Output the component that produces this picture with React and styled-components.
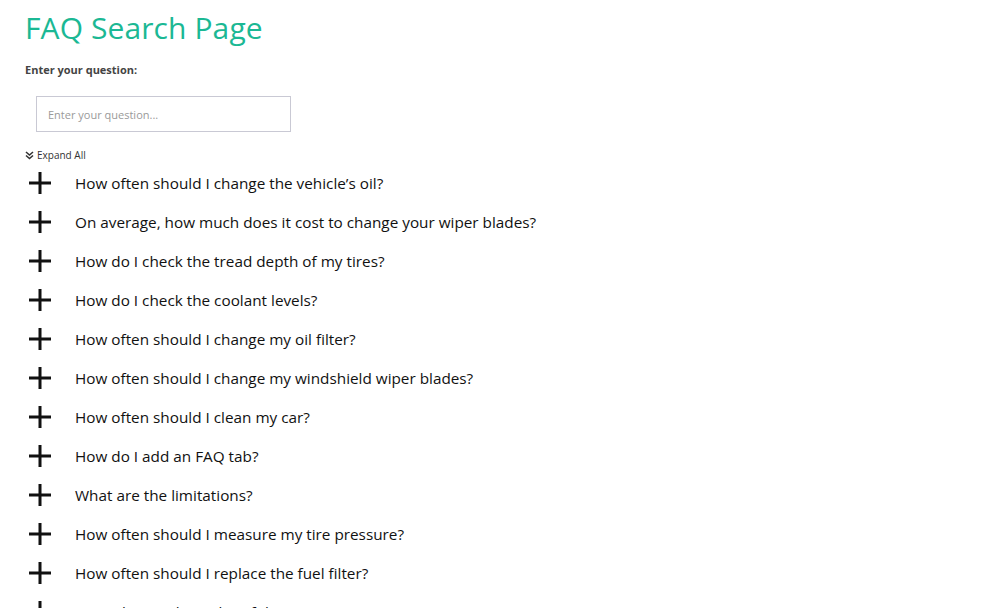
import React, { useState } from "react";
import styled, { createGlobalStyle } from "styled-components";

const GlobalStyle = createGlobalStyle`
  html, body {
    margin: 0;
    padding: 0;
    background: #fff;
  }
  body {
    font-family: "Open Sans", "Liberation Sans", sans-serif;
    color: #111;
  }
`;

const faqs = [
  "How often should I change the vehicle\u2019s oil?",
  "On average, how much does it cost to change your wiper blades?",
  "How do I check the tread depth of my tires?",
  "How do I check the coolant levels?",
  "How often should I change my oil filter?",
  "How often should I change my windshield wiper blades?",
  "How often should I clean my car?",
  "How do I add an FAQ tab?",
  "What are the limitations?",
  "How often should I measure my tire pressure?",
  "How often should I replace the fuel filter?",
  "Can I change the order of the FAQs?",
];

const Page = styled.div`
  padding: 8px 0 0 25px;
  height: 608px;
  overflow: hidden;
  box-sizing: border-box;
`;

const Title = styled.h1`
  margin: 0;
  font-size: 30px;
  font-weight: 400;
  line-height: 40px;
  color: #1bb894;
  letter-spacing: 0.1px;
`;

const Label = styled.label`
  display: block;
  margin-top: 14px;
  font-size: 11px;
  font-weight: 700;
  color: #444;
  line-height: 16px;
`;

const SearchInput = styled.input`
  display: block;
  margin: 18px 0 0 11px;
  width: 255px;
  height: 36px;
  box-sizing: border-box;
  border: 1px solid #c9c9d4;
  padding: 0 11px;
  font-family: inherit;
  font-size: 11px;
  color: #333;
  outline: none;
  &::placeholder {
    color: #9a9a9a;
  }
`;

const ExpandAll = styled.button`
  display: flex;
  align-items: center;
  gap: 3px;
  margin-top: 16px;
  padding: 0;
  border: 0;
  background: none;
  font-family: inherit;
  font-size: 10px;
  color: #333;
  cursor: pointer;
  line-height: 14px;
`;

const List = styled.div`
  display: flex;
  flex-direction: column;
  margin-top: 1px;
`;

const Row = styled.div`
  display: flex;
  align-items: center;
  height: 39px;
  cursor: pointer;
`;

const Toggle = styled.span`
  display: flex;
  width: 50px;
  padding-left: 4px;
  box-sizing: border-box;
`;

const Question = styled.span`
  font-size: 15.3px;
  color: #111;
  line-height: 20px;
`;

const Plus = () => (
  <svg width="22" height="22" viewBox="0 0 22 22">
    <rect x="0" y="9.5" width="22" height="3" fill="#111" />
    <rect x="9.5" y="0" width="3" height="22" fill="#111" />
  </svg>
);

const Minus = () => (
  <svg width="22" height="22" viewBox="0 0 22 22">
    <rect x="0" y="9.5" width="22" height="3" fill="#111" />
  </svg>
);

const Chevrons = () => (
  <svg width="9" height="9" viewBox="0 0 9 9">
    <path d="M1 1 L4.5 4 L8 1" stroke="#333" strokeWidth="1.6" fill="none" />
    <path d="M1 4.5 L4.5 7.5 L8 4.5" stroke="#333" strokeWidth="1.6" fill="none" />
  </svg>
);

export default function App() {
  const [open, setOpen] = useState({});

  return (
    <Page>
      <GlobalStyle />
      <Title>FAQ Search Page</Title>
      <Label htmlFor="q">Enter your question:</Label>
      <SearchInput id="q" placeholder="Enter your question..." />
      <ExpandAll>
        <Chevrons />
        Expand All
      </ExpandAll>
      <List>
        {faqs.map((q, i) => (
          <Row key={i} onClick={() => setOpen({ ...open, [i]: !open[i] })}>
            <Toggle>{open[i] ? <Minus /> : <Plus />}</Toggle>
            <Question>{q}</Question>
          </Row>
        ))}
      </List>
    </Page>
  );
}
